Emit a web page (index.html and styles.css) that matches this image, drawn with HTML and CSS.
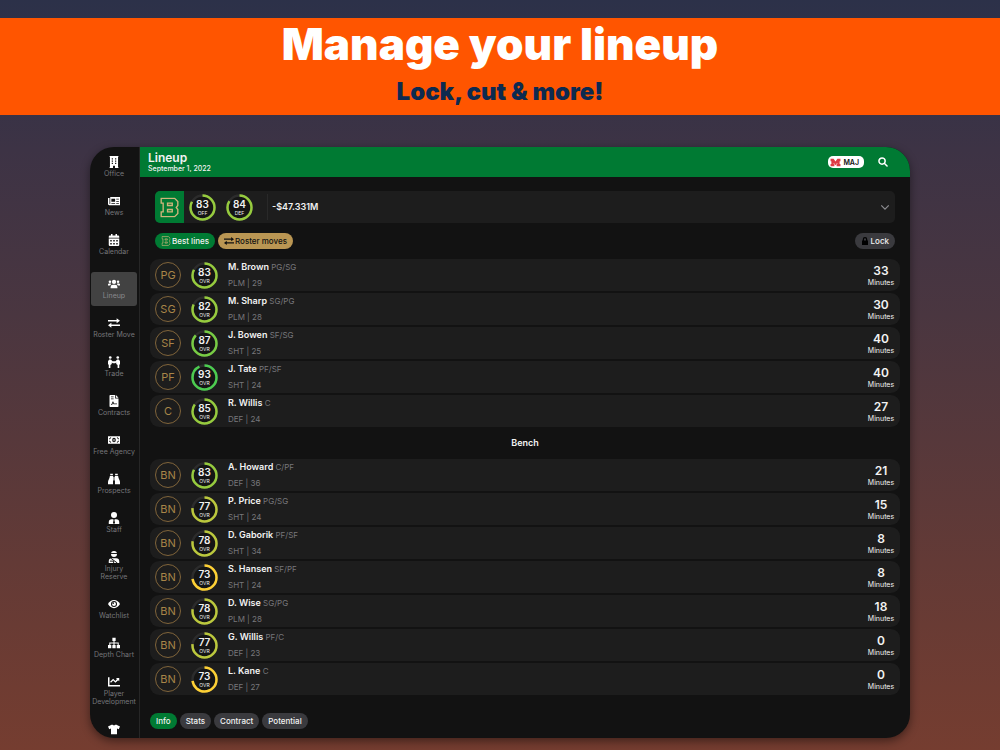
FILE: index.html
```html
<!DOCTYPE html>
<html lang="en">
<head>
  <meta charset="UTF-8">
  <meta name="viewport" content="width=device-width, initial-scale=1.0">
  <title>Lineup</title>
  <link rel="stylesheet" href="styles.css">
</head>
<body>
  <header class="banner">
    <h1>Manage your lineup</h1>
    <p>Lock, cut &amp; more!</p>
  </header>

  <div class="device">
    <!-- Sidebar -->
    <nav class="sidebar">
      <a href="#"><svg viewBox="0 0 16 16"><path fill-rule="evenodd" d="M2 0h12v1h-.6v14h.6v1H9.300v-3H6.700v3H2v-1h.6V1H2zM5 3v1.600h1.600V3zm4.400 0v1.600H11V3zM5 6v1.600h1.600V6zm4.400 0v1.600H11V6zM5 9v1.600h1.600V9zm4.400 0v1.600H11V9z"/></svg><span>Office</span></a>
      <a href="#"><svg viewBox="0 0 16 16"><path fill-rule="evenodd" d="M3 2.500h13v11H1.500A1.500 1.500 0 0 1 0 12V4h2v8h1zM4.500 5v4h5V5zm6.500 0v1h3.500V5zm0 3v1h3.500V8zm-6.500 2.500v1h5v-1zm6.500 0v1h3.500v-1z"/></svg><span>News</span></a>
      <a href="#"><svg viewBox="0 0 16 16"><path fill-rule="evenodd" d="M4 0h2v2h4V0h2v2h1.500A1.500 1.500 0 0 1 15 3.500V5H1V3.500A1.500 1.500 0 0 1 2.500 2H4zM1 6h14v8.500a1.500 1.500 0 0 1-1.500 1.500h-11A1.500 1.500 0 0 1 1 14.500zm2 2v2h2V8zm4 0v2h2V8zm4 0v2h2V8zm-8 4v2h2v-2zm4 0v2h2v-2zm4 0v2h2v-2z"/></svg><span>Calendar</span></a>
      <hr>
      <a href="#" class="active"><svg viewBox="0 0 16 16"><circle cx="8" cy="5.200" r="2.800"/><circle cx="2.600" cy="5" r="1.700"/><circle cx="13.400" cy="5" r="1.700"/><path d="M3.500 13.500v-1.500a3 3 0 0 1 3-3h3a3 3 0 0 1 3 3v1.500zM0 10V8.800a1.500 1.500 0 0 1 1.500-1.500h2l.8.7A4 4 0 0 0 2.800 10zm16 0V8.800a1.500 1.500 0 0 0-1.500-1.500h-2l-.8.7a4 4 0 0 1 1.500 2z"/></svg><span>Lineup</span></a>
      <a href="#"><svg viewBox="0 0 16 16"><path d="M0 4h11.500V1.600L16 5l-4.500 3.400V6H0zM16 12H4.500v2.400L0 11l4.500-3.400V10H16z"/></svg><span>Roster Move</span></a>
      <a href="#"><svg viewBox="0 0 16 16"><circle cx="3" cy="2" r="1.800"/><circle cx="13" cy="2" r="1.800"/><path d="M1.500 4.500h2.300L6 7h4l2.200-2.500h2.300L16 7v4l-1 .5V16h-2.200v-4L11 10.500V8.800L9.500 9.500h-3L5 8.800v1.700L3.200 12v4H1v-4.500L0 11V7z"/></svg><span>Trade</span></a>
      <a href="#"><svg viewBox="0 0 16 16"><path fill-rule="evenodd" d="M2 1a1 1 0 0 1 1-1h6.500v4.500H14V15a1 1 0 0 1-1 1H3a1 1 0 0 1-1-1zm2 1v1h3.500V2zm0 2.500v1h3.500v-1zM4 13h1.600l1-2.500.8 1.800H12v-1H8.200L7 8.800h-.8L4.800 12H4z"/><path d="M10.500 0L14 3.500h-3.500z"/></svg><span>Contracts</span></a>
      <a href="#"><svg viewBox="0 0 16 16"><path d="M0 3h16v10H0z"/><path class="cut" d="M1.500 6.500a2 2 0 0 0 2-2M14.500 6.500a2 2 0 0 1-2-2M1.500 9.500a2 2 0 0 1 2 2M14.500 9.500a2 2 0 0 0-2 2"/><ellipse cx="8" cy="8" rx="2.400" ry="3" class="hole"/><path d="M7.400 6.500h1.200v3H7.400z"/></svg><span>Free Agency</span></a>
      <a href="#"><svg viewBox="0 0 16 16"><path d="M3 1h3.500v2H3zM9.500 1H13v2H9.500zM2.500 4h4.200v11H0v-3c0-2 2-4 2.500-8zM9.300 4h4.200c.5 4 2.500 6 2.500 8v3H9.300zM7.200 5h1.600v5H7.200z"/></svg><span>Prospects</span></a>
      <a href="#"><svg viewBox="0 0 16 16"><circle cx="8" cy="4" r="4"/><path d="M1 16v-2.500a4 4 0 0 1 4-4h6a4 4 0 0 1 4 4V16z"/><path class="hole" d="M7.100 9.300h1.800L8.600 11l.8 3.500L8 16l-1.400-1.500.8-3.500z"/></svg><span>Staff</span></a>
      <a href="#"><svg viewBox="0 0 16 16"><path d="M4 4a4 4 0 0 1 8 0 4 4 0 0 1-8 0zM1 16v-2.500a4 4 0 0 1 4-4h6a4 4 0 0 1 4 4V16z"/><path class="cut" d="M4 3.300h8M3.500 9.500l9 6.500M2.500 13.500h5v2.500"/></svg><span>Injury<br>Reserve</span></a>
      <a href="#"><svg viewBox="0 0 16 16"><path d="M0 8c2-3.600 4.800-5.500 8-5.500S14 4.400 16 8c-2 3.600-4.800 5.500-8 5.500S2 11.600 0 8z"/><circle class="hole" cx="8" cy="8" r="4"/><circle cx="8" cy="8" r="2.700"/><circle class="hole" cx="6.900" cy="6.900" r="1.100"/></svg><span>Watchlist</span></a>
      <a href="#"><svg viewBox="0 0 16 16"><path d="M5.800 1h4.400v4.200H8.700v2h5.600v3.300H16V15h-4.400v-4.500h1.300V8.600H8.700v1.900h1.500V15H5.800v-4.500h1.500V8.600H3.100v1.900h1.300V15H0v-4.500h1.700V7.200h5.600v-2H5.800z"/></svg><span>Depth Chart</span></a>
      <a href="#"><svg viewBox="0 0 16 16"><path d="M0 1.500h2V12h14v2H0z"/><path d="M10.500 2.500H15V7l-1.500-1.500-3.600 3.600-3-3L4 9 2.800 7.800l4.100-4 3 3L12 4z"/></svg><span>Player<br>Development</span></a>
      <a href="#" aria-label="Jerseys"><svg viewBox="0 0 16 16"><path d="M5.500 2a3 1.800 0 0 0 5 0L16 4.500l-1.700 3.800-2.300-1V15H4V7.300l-2.300 1L0 4.500z"/></svg></a>
    </nav>

    <main class="main">
      <header class="topbar">
        <div class="title">
          <h2>Lineup</h2>
          <p>September 1, 2022</p>
        </div>
        <button class="league">
          <svg viewBox="0 0 20 16"><path d="M1 1h5.500L10 6l3.500-5H19v4.500h-1.500v5H19V15h-7v-4.500h1.200V8.500L10 13 6.800 8.500v2H8V15H1v-4.500h1.500v-5H1z"/></svg>
          MAJ
        </button>
        <button class="search" aria-label="Search">
          <svg viewBox="0 0 16 16"><circle cx="6.500" cy="6.500" r="5"/><path d="M10.500 10.500l4 4"/></svg>
        </button>
      </header>

      <div class="content">
        <button class="team">
          <span class="logo"><svg viewBox="0 0 24 26"><use href="#b-logo"/></svg></span>
          <span class="ring" data-value="83" data-label="OFF"></span>
          <span class="ring" data-value="84" data-label="DEF"></span>
          <span class="cap">-$47.331M</span>
          <svg class="chevron" viewBox="0 0 12 8"><path d="M1.500 1.500L6 6l4.500-4.500"/></svg>
        </button>

        <div class="actions">
          <button class="chip green"><svg viewBox="0 0 24 26"><use href="#b-logo"/></svg>Best lines</button>
          <button class="chip gold"><svg viewBox="0 0 16 16"><path d="M0 4h11.500V1.600L16 5l-4.500 3.400V6H0zM16 12H4.500v2.400L0 11l4.500-3.400V10H16z"/></svg>Roster moves</button>
          <button class="chip lock"><svg viewBox="0 0 16 16"><path fill-rule="evenodd" d="M2 7h1.500V4.500a4.500 4.500 0 0 1 9 0V7H14v9H2zm4 0h4V4.500a2 2 0 0 0-4 0z"/></svg>Lock</button>
        </div>

        <div class="players" id="starters"></div>
        <h3>Bench</h3>
        <div class="players" id="bench"></div>

        <div class="tabs">
          <button class="chip green">Info</button>
          <button class="chip">Stats</button>
          <button class="chip">Contract</button>
          <button class="chip">Potential</button>
        </div>
      </div>
    </main>
  </div>

  <svg class="defs" aria-hidden="true">
    <symbol id="b-logo" viewBox="0 0 24 26">
      <path class="b-line" d="M1.500 1.500h17l4 4v5L20.500 13l2 2.500v5l-4 4h-17v-6H4v-11H1.500z"/>
      <path class="b-line" d="M9.500 7.500h6v3h-6zM9.500 15.500h6v3h-6z"/>
    </symbol>
  </svg>
  <script src="script.js"></script>
</body>
</html>
```
FILE: styles.css
```css
* {
  box-sizing: border-box;
}

body {
  display: flex;
  flex-direction: column;
  height: 100vh;
  margin: 0;
  padding: 18px 0 12px;
  overflow: hidden;
  font-family: Inter, "Liberation Sans", sans-serif;
  color: #f2f2f2;
  background: linear-gradient(#2c3149, #3d3345 20%, #4a3640 42%, #633a36 75%, #753d30);
}

h1, h2, h3, p {
  margin: 0;
}

button {
  padding: 0;
  border: none;
  background: none;
  color: inherit;
  font: inherit;
  cursor: pointer;
}

svg {
  display: block;
  flex: none;
  fill: currentColor;
}

.defs {
  position: absolute;
  width: 0;
  height: 0;
}

/* Banner */
.banner {
  flex: none;
  height: 97px;
  background-color: #ff5500;
  text-align: center;
}

.banner h1 {
  font-size: 44px;
  font-weight: 900;
  line-height: 52px;
  color: #fff;
}

.banner p {
  font-size: 24px;
  font-weight: 900;
  line-height: 44px;
  color: #0d2a50;
}

.device {
  display: flex;
  flex: 1;
  min-height: 0;
  margin: 32px 9% 0;
  overflow: hidden;
  border-radius: 24px;
  background-color: #121212;
  box-shadow: 0 3px 10px rgba(0, 0, 0, 0.45);
}

/* Sidebar */
.sidebar {
  display: flex;
  flex: none;
  flex-direction: column;
  gap: 5px;
  width: 50px;
  padding: 3px 2px 0 1px;
  overflow: hidden;
  border-right: 1px solid #262626;
}

.sidebar a {
  display: flex;
  flex: none;
  flex-direction: column;
  align-items: center;
  gap: 2px;
  min-height: 34px;
  padding: 6px 0;
  border-radius: 3px;
  font-size: 7px;
  line-height: 8px;
  text-align: center;
  text-decoration: none;
  white-space: nowrap;
  color: #76767a;
}

.sidebar a.active {
  background-color: #424242;
  color: #8a8a8e;
}

.sidebar svg {
  width: 12px;
  height: 12px;
  fill: #fff;
}

.sidebar .hole {
  fill: #121212;
}

.sidebar .cut {
  fill: none;
  stroke: #121212;
  stroke-width: 1.3;
}

.sidebar hr {
  width: 36px;
  height: 1px;
  margin: 0 auto;
  border: none;
  background-color: #303030;
}

.main {
  display: flex;
  flex: 1;
  flex-direction: column;
  min-width: 0;
}

.topbar {
  display: flex;
  align-items: center;
  flex: none;
  height: 30px;
  padding: 0 22px 0 8px;
  background-color: #007a33;
}

.title {
  flex: 1;
}

.title h2 {
  font-size: 12px;
  font-weight: 600;
  line-height: 13px;
}

.title p {
  font-size: 7px;
  font-weight: 500;
  line-height: 9px;
}

.league {
  display: flex;
  align-items: center;
  gap: 2px;
  height: 12px;
  margin-right: 14px;
  padding: 0 5px 0 2px;
  border-radius: 5px;
  background-color: #fff;
  color: #111;
  font-size: 7px;
  font-weight: 600;
}

.league svg {
  width: 11px;
  height: 9px;
  fill: #e03a45;
}

.search svg {
  width: 10px;
  height: 10px;
  fill: none;
  stroke: #fff;
  stroke-width: 2.4;
  stroke-linecap: round;
}

.content {
  display: flex;
  flex: 1;
  flex-direction: column;
  min-height: 0;
  padding: 14px 10px 9px;
}

/* Team bar */
.team {
  display: flex;
  align-items: center;
  gap: 10px;
  height: 32px;
  margin: 0 5px;
  padding-right: 5px;
  overflow: hidden;
  border-radius: 5px;
  background-color: #1d1d1d;
}

.logo {
  display: flex;
  align-items: center;
  justify-content: center;
  width: 29px;
  height: 32px;
  margin-right: -5px;
  background-color: #007a33;
}

.logo svg {
  width: 19px;
  height: 21px;
}

.b-line {
  fill: none;
  stroke: #cfb57b;
  stroke-width: 1.7;
}

.cap {
  flex: 1;
  height: 26px;
  margin-left: 4px;
  padding-left: 4px;
  border-left: 1px solid #292929;
  font-size: 9px;
  font-weight: 600;
  line-height: 26px;
  text-align: left;
}

.chevron {
  width: 10px;
  height: 7px;
  fill: none;
  stroke: #8a8a8e;
  stroke-width: 1.5;
}

/* Buttons */
.actions {
  display: flex;
  gap: 3px;
  margin: 10px 5px;
}

.chip {
  display: flex;
  align-items: center;
  gap: 1px;
  height: 16px;
  padding: 0 6px;
  border-radius: 8px;
  background-color: #3a3a3e;
  font-size: 8px;
  font-weight: 500;
  line-height: 16px;
}

.chip svg {
  width: 10px;
  height: 10px;
}

.green {
  background-color: #007a33;
}

.gold {
  background-color: #ba9653;
  color: #111;
}

.lock {
  gap: 2px;
  margin-left: auto;
}

.lock svg {
  width: 8px;
  height: 8px;
  fill: #000;
}

/* Player rows */
.players {
  display: flex;
  flex-direction: column;
  gap: 2px;
}

.player {
  display: flex;
  align-items: center;
  gap: 10px;
  height: 32px;
  padding: 0 5px;
  border-radius: 9px;
  background-color: #1d1d1d;
}

.position {
  width: 26px;
  height: 26px;
  border: 1px solid #80643a;
  border-radius: 50%;
  font-size: 11px;
  line-height: 24px;
  text-align: center;
  color: #a88548;
}

.ring {
  display: grid;
  width: 27px;
  height: 27px;
}

.ring svg,
.ring-text {
  grid-area: 1 / 1;
}

.ring svg {
  width: 27px;
  height: 27px;
  fill: #151515;
  stroke-width: 2.5;
}

.ring-text {
  display: flex;
  flex-direction: column;
  align-items: center;
  padding-top: 4px;
  font-size: 5px;
  line-height: 6px;
}

.ring-text b {
  font-size: 10px;
  font-weight: 600;
  line-height: 12px;
}

.info {
  flex: 1;
  font-size: 8px;
  line-height: 16px;
  color: #77777b;
}

.info b {
  font-size: 9px;
  font-weight: 600;
  color: #f2f2f2;
}

.minutes {
  width: 28px;
  font-size: 7px;
  line-height: 9px;
  text-align: center;
}

.minutes b {
  display: block;
  font-size: 12px;
  font-weight: 600;
  line-height: 14px;
}

h3 {
  font-size: 9px;
  font-weight: 600;
  line-height: 32px;
  text-align: center;
}

.tabs {
  display: flex;
  gap: 3px;
  margin-top: auto;
}
```
FILE: script.js
```js
const starters = [
  ['PG', 83, 'M. Brown', 'PG/SG', 'PLM', 29, 33],
  ['SG', 82, 'M. Sharp', 'SG/PG', 'PLM', 28, 30],
  ['SF', 87, 'J. Bowen', 'SF/SG', 'SHT', 25, 40],
  ['PF', 93, 'J. Tate', 'PF/SF', 'SHT', 24, 40],
  ['C', 85, 'R. Willis', 'C', 'DEF', 24, 27],
];

const bench = [
  ['BN', 83, 'A. Howard', 'C/PF', 'DEF', 36, 21],
  ['BN', 77, 'P. Price', 'PG/SG', 'SHT', 24, 15],
  ['BN', 78, 'D. Gaborik', 'PF/SF', 'SHT', 34, 8],
  ['BN', 73, 'S. Hansen', 'SF/PF', 'SHT', 24, 8],
  ['BN', 78, 'D. Wise', 'SG/PG', 'PLM', 28, 18],
  ['BN', 77, 'G. Willis', 'PF/C', 'DEF', 23, 0],
  ['BN', 73, 'L. Kane', 'C', 'DEF', 27, 0],
];

function ringColor(value) {
  if (value >= 90) return '#4ccc50';
  if (value >= 87) return '#78cc44';
  if (value >= 80) return '#96cb3e';
  if (value >= 75) return '#bbc83d';
  return '#fdd035';
}

function ring(value, label) {
  return `
    <svg viewBox="0 0 27 27">
      <circle cx="13.5" cy="13.5" r="12" stroke="#2c2c2c"/>
      <circle cx="13.5" cy="13.5" r="12" fill="none" stroke="${ringColor(value)}" pathLength="100" stroke-dasharray="${value} 100" transform="rotate(-90 13.5 13.5)"/>
    </svg>
    <span class="ring-text"><b>${value}</b>${label}</span>`;
}

function row([slot, rating, name, positions, style, age, minutes]) {
  return `
    <div class="player">
      <div class="position">${slot}</div>
      <div class="ring">${ring(rating, 'OVR')}</div>
      <div class="info"><b>${name}</b> ${positions}<p>${style} | ${age}</p></div>
      <div class="minutes"><b>${minutes}</b>Minutes</div>
    </div>`;
}

document.getElementById('starters').innerHTML = starters.map(row).join('');
document.getElementById('bench').innerHTML = bench.map(row).join('');
document.querySelectorAll('.team .ring').forEach((el) => {
  el.innerHTML = ring(el.dataset.value, el.dataset.label);
});
```
